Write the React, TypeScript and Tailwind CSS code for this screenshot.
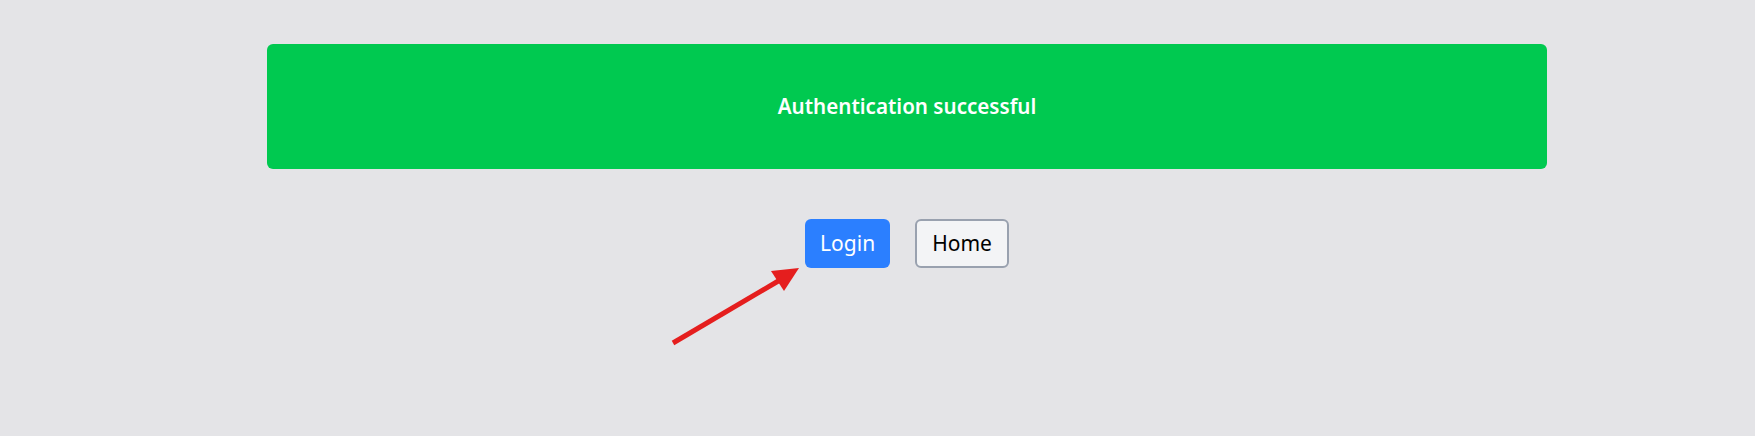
const App = () => {
  return (
    <div className="relative min-h-[436px] bg-[#e4e4e7] pt-[44px] font-['Noto_Sans',sans-serif]">
      <div className="ml-[267px] w-[1280px]">
        <div className="flex h-[125px] items-center justify-center rounded-md bg-[#00c950]">
          <p className="text-[20.6px] font-semibold text-white">Authentication successful</p>
        </div>
        <div className="mt-[50px] flex justify-center gap-[25px]">
          <button className="h-[49px] rounded-md bg-[#2b7fff] px-[15px] text-[21px] text-white">
            Login
          </button>
          <button className="h-[49px] rounded-md border-2 border-[#99a1af] bg-[#f3f4f6] px-[15px] text-[21px] text-black">
            Home
          </button>
        </div>
      </div>
      <svg
        className="absolute left-[660px] top-[260px]"
        width="150"
        height="90"
        viewBox="0 0 150 90"
      >
        <line x1="13" y1="83" x2="120" y2="20" stroke="#e51e1e" strokeWidth="5" />
        <polygon points="111,11 139,8 124,31" fill="#e51e1e" />
      </svg>
    </div>
  );
};

export default App;
